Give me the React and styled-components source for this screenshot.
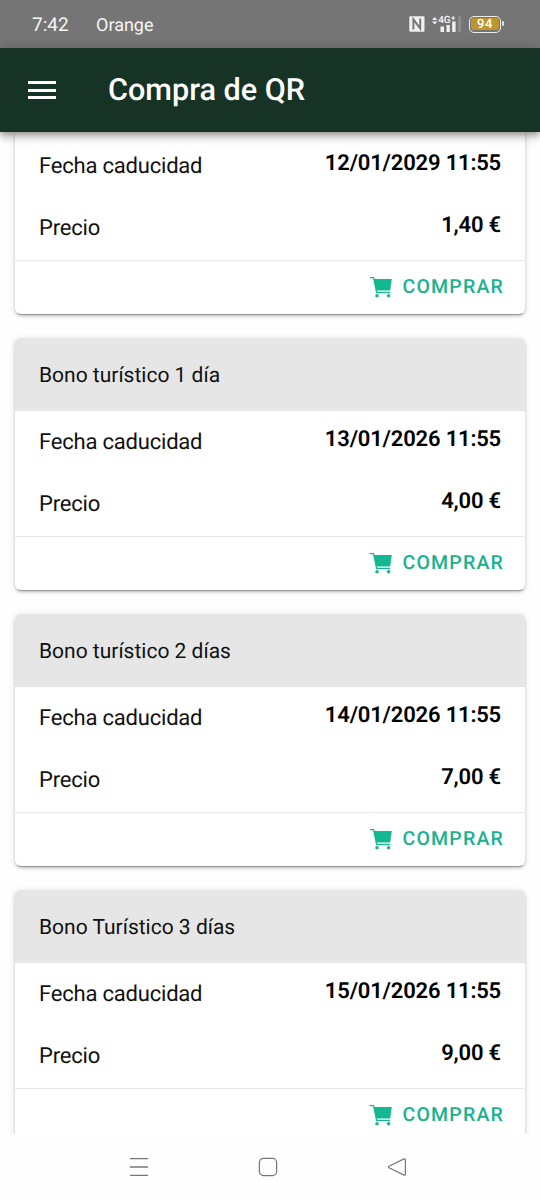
import React from "react";
import styled, { createGlobalStyle } from "styled-components";

const GlobalStyle = createGlobalStyle`
  * {
    box-sizing: border-box;
  }

  body {
    margin: 0;
    background: #fefefe;
    font-family: Roboto, "Liberation Sans", sans-serif;
    text-rendering: geometricPrecision;
  }
`;

const tickets = [
  { title: "Bono turístico 1 día", date: "13/01/2026 11:55", price: "4,00 €" },
  { title: "Bono turístico 2 días", date: "14/01/2026 11:55", price: "7,00 €" },
  { title: "Bono Turístico 3 días", date: "15/01/2026 11:55", price: "9,00 €" },
];

function NfcIcon() {
  return (
    <svg width="16" height="16" viewBox="0 0 16 16">
      <rect x="0.3" y="0.3" width="15.2" height="15.4" rx="1" fill="#f0f0f0" />
      <path d="M4.4 13.6V3.4L11.2 12.4V2.4" fill="none" stroke="#737373" strokeWidth="1.9" />
    </svg>
  );
}

function SignalIcon() {
  return (
    <svg width="31" height="18" viewBox="0 0 31 18">
      <path d="M0 5L2.7 2L5.4 5ZM0 6.4L2.7 9.4L5.4 6.4Z" fill="#efefef" />
      <text x="6.2" y="8.4" fontSize="10" fontWeight="500" fill="#f4f4f4">4G</text>
      <path d="M19.2 3H23.2M21.2 1V5" stroke="#efefef" strokeWidth="1.1" />
      <path d="M8.5 11.5H12V17H8.5ZM14.5 10H17.8V17H14.5ZM20.2 6.4H23.6V17H20.2Z" fill="#f1f1f1" />
      <path d="M26 1.4H29.2V17H26Z" fill="#8c8c8c" />
    </svg>
  );
}

function CartIcon() {
  return (
    <svg width="24" height="22" viewBox="0 0 24 22">
      <path d="M0.8 1.7H4.6L7.6 16.4H21.2" fill="none" stroke="#14b890" strokeWidth="1.3" />
      <path d="M4.8 3H22.8L21.2 14.6H7.3Z" fill="#14b890" />
      <circle cx="8" cy="19.7" r="1.8" fill="#14b890" />
      <circle cx="19.6" cy="19.7" r="1.8" fill="#14b890" />
    </svg>
  );
}

function Ticket(props) {
  const { title, date, price } = props;

  return (
    <Card>
      {title && <CardHeader>{title}</CardHeader>}
      <CardBody>
        <Row>
          <Label>Fecha caducidad</Label>
          <Value>{date}</Value>
        </Row>
        <Row>
          <Label>Precio</Label>
          <Value>{price}</Value>
        </Row>
      </CardBody>
      <CardActions>
        <BuyButton>
          <CartIcon />
          Comprar
        </BuyButton>
      </CardActions>
    </Card>
  );
}

function App() {
  return (
    <Screen>
      <GlobalStyle />
      <StatusBar>
        <Clock>7:42</Clock>
        <Carrier>Orange</Carrier>
        <StatusIcons>
          <NfcIcon />
          <SignalIcon />
          <Battery>
            <BatteryLevel>94</BatteryLevel>
          </Battery>
        </StatusIcons>
      </StatusBar>
      <Toolbar>
        <MenuButton aria-label="Menu">
          <MenuLine />
          <MenuLine />
          <MenuLine />
        </MenuButton>
        <Title>Compra de QR</Title>
      </Toolbar>
      <Content>
        <Ticket date="12/01/2029 11:55" price="1,40 €" />
        {tickets.map((ticket) => (
          <Ticket key={ticket.title} {...ticket} />
        ))}
      </Content>
      <NavBar>
        <svg width="20" height="20" viewBox="0 0 20 20" fill="none" stroke="#777" strokeWidth="1.3">
          <path d="M1 1.7H19M1 10H19M1 18.3H19" />
        </svg>
        <svg width="20" height="20" viewBox="0 0 20 20" fill="none" stroke="#777" strokeWidth="1.2">
          <rect x="1.4" y="1.4" width="17.2" height="17.2" rx="4" />
        </svg>
        <svg width="20" height="20" viewBox="0 0 20 20" fill="none" stroke="#777" strokeWidth="1.2">
          <path d="M17 1.9L2 9.2Q0.9 10 2 10.8L17 18.1Q18.4 18.4 18.4 17V3Q18.4 1.6 17 1.9Z" />
        </svg>
      </NavBar>
    </Screen>
  );
}

const Screen = styled.div`
  width: 540px;
  height: 1200px;
  display: flex;
  flex-direction: column;
  overflow: hidden;
`;

const StatusBar = styled.div`
  height: 48px;
  flex: none;
  display: flex;
  align-items: center;
  padding: 0 39px 0 32px;
  background: #757575;
  color: #f6f6f6;
  font-size: 18px;
`;

const Clock = styled.span`
  width: 64px;
  padding-top: 1px;
  font-size: 19px;
`;

const Carrier = styled.span`
  padding-top: 2px;
`;

const StatusIcons = styled.div`
  margin-left: auto;
  display: flex;
  align-items: center;
  gap: 6.5px;
`;

const Battery = styled.div`
  position: relative;
  width: 32px;
  height: 17px;
  padding: 1.2px;
  border: 1.5px solid #ececec;
  border-radius: 5px;

  &::after {
    content: "";
    position: absolute;
    right: -3.5px;
    top: 4.5px;
    width: 1.5px;
    height: 5px;
    background: #e0e0e0;
    border-radius: 1px;
  }
`;

const BatteryLevel = styled.div`
  height: 100%;
  display: flex;
  align-items: center;
  justify-content: center;
  border-radius: 2.5px;
  background: #bd942f;
  color: #fff;
  font-size: 13px;
  font-weight: 500;
  letter-spacing: 0.5px;
`;

const Toolbar = styled.header`
  position: relative;
  z-index: 1;
  height: 84px;
  flex: none;
  display: flex;
  align-items: center;
  padding-left: 28px;
  background: #173325;
  box-shadow: 0 3px 6px -1px rgba(0, 0, 0, 0.3), 0 6px 8px rgba(0, 0, 0, 0.14), 0 1px 15px rgba(0, 0, 0, 0.12);
`;

const MenuButton = styled.button`
  width: 28px;
  padding: 0;
  display: flex;
  flex-direction: column;
  gap: 4.5px;
  border: 0;
  background: none;
`;

const MenuLine = styled.span`
  height: 3px;
  background: #fff;
`;

const Title = styled.h1`
  margin: 2px 0 0 52px;
  color: #fff;
  font-size: 30.6px;
  font-weight: 500;
  line-height: 36px;
`;

const Content = styled.main`
  height: 1002px;
  flex: none;
  display: flex;
  flex-direction: column;
  gap: 24px;
  padding: 0 15px;
  overflow: hidden;
`;

/* the first card is scrolled partly under the toolbar */
const Card = styled.section`
  flex: none;
  border-radius: 6px;
  background: #fff;
  box-shadow: 0 3px 1px -2px rgba(0, 0, 0, 0.25), 0 2px 3px rgba(0, 0, 0, 0.18), 0 1px 7px rgba(0, 0, 0, 0.12);

  &:first-child {
    padding-top: 3px;
    border-radius: 0 0 6px 6px;
  }
`;

const CardHeader = styled.div`
  height: 73px;
  display: flex;
  align-items: center;
  padding: 3px 24px 0;
  border-radius: 6px 6px 0 0;
  background: #e6e6e6;
  color: #111;
  font-size: 21px;
  line-height: 28px;
`;

const CardBody = styled.div`
  height: 125px;
`;

const Row = styled.div`
  height: 62px;
  display: flex;
  justify-content: space-between;
  padding: 16px 24px 0;
  font-size: 22px;
  line-height: 31px;
`;

const Label = styled.span`
  color: #111;
  letter-spacing: -0.2px;
`;

const Value = styled.span`
  height: 26px;
  line-height: 26px;
  color: #000;
  font-weight: 600;
  letter-spacing: -0.18px;
`;

const CardActions = styled.div`
  height: 54px;
  display: flex;
  justify-content: flex-end;
  align-items: center;
  padding: 0 21px 2px 0;
  border-top: 1px solid #e6e6e6;
`;

const BuyButton = styled.button`
  display: flex;
  align-items: center;
  gap: 9px;
  padding: 0;
  border: 0;
  background: none;
  color: #1bb18e;
  font-family: inherit;
  font-size: 19.5px;
  font-weight: 500;
  letter-spacing: 1.2px;
  text-transform: uppercase;
  text-rendering: inherit;
`;

const NavBar = styled.nav`
  flex: 1;
  display: flex;
  justify-content: center;
  align-items: center;
  gap: 109px;
  padding-right: 5px;
  background: #fefefe;
`;

export default App;
